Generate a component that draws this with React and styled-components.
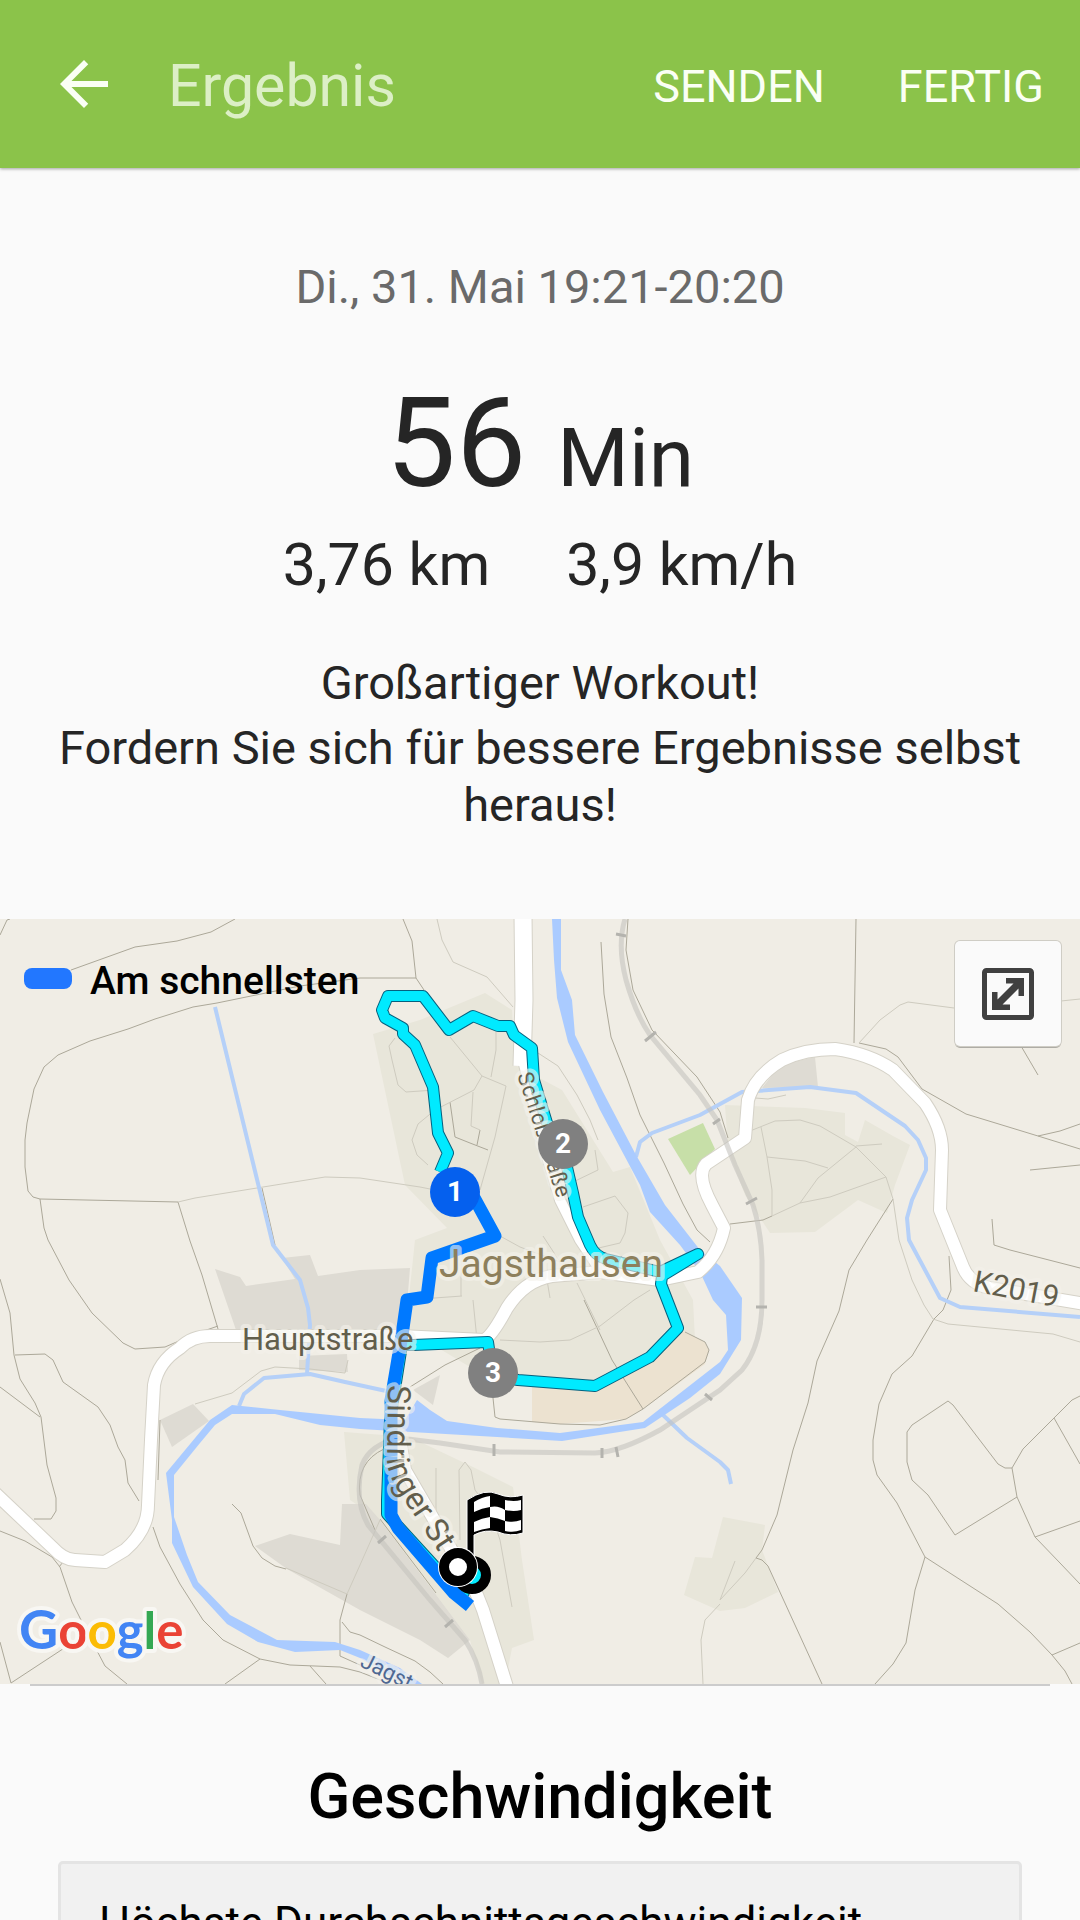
/**
 * App.jsx : Workout result screen
 */

import React from "react";
import styled, { createGlobalStyle, css } from "styled-components";

const App = () => {
  return (
    <Screen>
      <GlobalStyle />
      <Header>
        <BackButton aria-label="Zurück">
          <svg viewBox="0 0 24 24" width="72" height="72" fill="currentColor">
            <path d="M20 11H7.83l5.59-5.59L12 4l-8 8 8 8 1.41-1.41L7.83 13H20v-2z" />
          </svg>
        </BackButton>
        <HeaderTitle>Ergebnis</HeaderTitle>
        <HeaderActions>
          <TextButton>SENDEN</TextButton>
          <TextButton>FERTIG</TextButton>
        </HeaderActions>
      </Header>
      <Content>
        <Summary>
          <DateText>Di., 31. Mai 19:21-20:20</DateText>
          <Duration>
            56 <Unit>Min</Unit>
          </Duration>
          <Stats>
            <span>3,76 km</span>
            <span>3,9 km/h</span>
          </Stats>
          <Praise>Großartiger Workout!</Praise>
          <Message>Fordern Sie sich für bessere Ergebnisse selbst heraus!</Message>
        </Summary>
        <MapBox>
          <RouteMap />
          <Legend>
            <LegendColor />
            Am schnellsten
          </Legend>
          <ExpandButton aria-label="Karte vergrößern">
            <svg viewBox="0 0 52 52" width="52" height="52">
              <rect x="2.5" y="2.5" width="47" height="47" rx="2" fill="none" stroke="#404040" strokeWidth="5" />
              <path
                d="M24 10H42V28H36.500V20.500L20.500 36.500H28V42H10V24H15.500V31.500L31.500 15.500H24Z"
                fill="#404040"
              />
            </svg>
          </ExpandButton>
        </MapBox>
        <Divider />
        <SectionTitle>Geschwindigkeit</SectionTitle>
        <SpeedCard>Höchste Durchschnittsgeschwindigkeit</SpeedCard>
      </Content>
    </Screen>
  );
};

// field paths and parcel borders
const paths = [
  "M0 935L7 920L10 919",
  "M71 970L135 947L177 941L211 932L235 919",
  "M416 978H360L300 986L217 1003L193 1007L155 1019L128 1029L90 1041L58 1055L44 1067L34 1089L27 1123L25 1140V1167L28 1191L33 1197L40 1199L178 1202",
  "M403 919L412 941L416 978L424 990",
  "M178 1202L190 1241L202 1275L218 1329",
  "M40 1199L44 1228L48 1240L69 1280L92 1313L123 1343L135 1349L165 1347L195 1334L218 1326",
  "M262 1188L275 1245",
  "M0 1279L10 1313L14 1355L20 1379L35 1403L41 1417L47 1465L56 1498V1511L51 1519H34",
  "M0 1387L40 1417",
  "M15 1355L45 1354L53 1360L63 1382L98 1407L110 1425L118 1447L125 1460L128 1483L139 1501",
  "M0 1531L25 1541L52 1557L60 1567L72 1602L85 1628L105 1666L127 1684M59 1567L63 1562",
  "M153 1527L160 1547L180 1584L203 1620L223 1640L260 1659L290 1665L340 1667L360 1672L383 1681",
  "M225 1684L260 1659M310 1666L326 1684",
  "M0 1642L11 1683L75 1641",
  "M160 1420L158 1480",
  "M232 1504L241 1513L253 1546L262 1558L275 1566L286 1569",
  "M347 1594L340 1620V1656L360 1665M342 1622L350 1632L360 1635L385 1647L415 1661L430 1672L443 1684",
  "M601 942L604 994L611 1037L627 1078L640 1115L664 1163L683 1204L697 1230L710 1242",
  "M628 919L626 950L633 990L652 1030L697 1077L720 1112L728 1138",
  "M450 1102L455 1137L470 1143L488 1150M477 1145L480 1130",
  "M856 919L854 1043",
  "M859 1043L886 1049L898 1057L922 1089L966 1114L1038 1136L1080 1149M1038 1136L1060 1131L1080 1124",
  "M1021 1046L1038 1075",
  "M1030 1170L1060 1167L1080 1165",
  "M992 1219L994 1245L1010 1250L1080 1268",
  "M893 1199L867 1240L849 1270L839 1311L817 1361L808 1403L793 1450L777 1515L762 1550L756 1558",
  "M730 1224L763 1220L772 1216",
  "M949 1256L951 1290L943 1310L934 1319L912 1356L892 1374L879 1404L873 1440V1460L877 1475L897 1503L925 1557L915 1590L906 1643L893 1664L875 1684",
  "M925 1557L998 1604L1030 1632L1052 1655L1065 1671L1072 1684M1052 1655L1080 1643",
  "M756 1558L762 1560L768 1566L822 1684",
  "M948 1401L912 1425L907 1432V1462L912 1480L928 1495L955 1535L1017 1497L1012 1468H1005L998 1464L953 1405Z",
  "M1012 1468L1023 1449L1054 1418L1072 1400L1080 1396M1054 1418L1080 1464",
  "M1017 1497L1035 1537L1060 1563L1080 1584M1035 1537L1080 1521",
  "M380 1519L436 1593",
  "M584 1300L612 1360L643 1409",
  "M410 1387L445 1365L480 1348",
  "M493 1398L495 1417L500 1419L560 1424L600 1425L626 1419L643 1409L705 1362L709 1350L705 1342L685 1332",
  "M384 1449Q356 1462 360 1495L375 1530",
];

const faintPaths = [
  "M178 1202L195 1198L325 1177L360 1178L420 1187L435 1190",
  "M195 1404L232 1393L261 1371L275 1367L310 1369L345 1373L348 1360",
  "M286 1568L347 1594L360 1565L380 1520",
  "M437 919L442 940L453 962L487 977L513 1007",
  "M395 1038L389 1046L392 1060L398 1085L406 1092L435 1090",
  "M450 1037L482 1076L474 1090L435 1110L418 1124L412 1140L417 1155L428 1165",
  "M482 1076L506 1086L495 1137L480 1190M496 1032V1050L491 1077",
  "M473 1092L471 1126L480 1130",
  "M538 1053L558 1066L577 1095L590 1120L598 1140M595 1150L598 1170L573 1182",
  "M583 1207L615 1196L628 1213L625 1233L620 1243L590 1250",
  "M500 1236L520 1247L560 1262M543 1236L560 1262",
  "M473 1300L477 1340M500 1340L540 1342L570 1340L600 1326L634 1300L650 1290",
  "M407 1300L462 1296M461 1296V1260M577 1283L600 1330M547 1280L550 1298",
  "M436 1468V1525M460 1540L459 1470L465 1462L471 1470L475 1490L490 1510L500 1540L512 1607",
  "M703 1684L701 1640L705 1620L720 1604",
  "M859 1043L880 1020L900 1005L908 1002L954 1008M1061 1001L1080 999",
  "M750 1131L775 1121L800 1120L820 1126L856 1147L886 1177L893 1199L899 1240L912 1280L924 1305L933 1319L948 1324L1053 1334L1080 1342",
  "M761 1127L767 1157L772 1190V1216L800 1203L830 1197L886 1177",
  "M767 1157L805 1161L828 1168M856 1147L818 1178L800 1203M856 1146L882 1144",
  "M720 1600L745 1573L756 1558M720 1600L735 1561",
  "M755 1098L768 1099L786 1095",
];

const settlements = [
  "M373 1034L420 1020L485 993L512 1010L515 1065L562 1090L613 1172L630 1167L660 1240L693 1300L695 1340L590 1385H500L425 1340L405 1335L415 1240L447 1228L405 1185Z",
  "M344 1432L410 1437L475 1468L513 1487L522 1560L534 1640L512 1648L505 1684H482L470 1640L380 1520L350 1500Z",
  "M725 1105L805 1108L845 1113V1135L858 1142L865 1120L893 1136L910 1145L895 1185L887 1213L858 1200L815 1232L770 1233L745 1195L728 1150Z",
  "M723 1517L765 1525L762 1550L778 1592L745 1608L720 1611L684 1595L695 1557L712 1558Z",
];

const industry = [
  "M215 1269L240 1277L246 1286L295 1279L282 1258L310 1255L318 1276L360 1270L410 1268L405 1330H236Z",
  "M299 1356L347 1354L348 1372L299 1370Z",
  "M160 1420L193 1404L209 1421L172 1447Z",
  "M255 1546L290 1534L340 1545L342 1504H366L380 1520L470 1640L448 1658L420 1640L360 1610L287 1569Z",
  "M413 1390L440 1375L433 1405Z",
  "M762 1088L780 1065L815 1057L818 1087Z",
];

const river =
  "M552 919L554 960L557 998L568 1042L600 1110L640 1185L650 1212L680 1245L700 1272L713 1300L726 1315L728 1350L720 1362L643 1422L560 1433L497 1428L447 1421L430 1410L417 1400L405 1420L360 1418L280 1410L232 1405L210 1420L166 1473L172 1520V1543L193 1587L227 1624L258 1642L295 1652L340 1650L360 1658L404 1684H422L400 1668L360 1650L335 1642L277 1640L230 1615L198 1582L187 1555L174 1517V1475L200 1443L215 1425L232 1414H275L320 1425L360 1429L497 1437L562 1441L645 1428L690 1398L720 1374L741 1340L742 1298L720 1266L700 1250L665 1205L636 1155L603 1092L575 1035L572 1000L561 970V919Z";

const streams = [
  "M215 1007L273 1245L300 1280L308 1308L310 1325L307 1374",
  "M239 1406L244 1394L264 1378L310 1374L345 1382L400 1394",
  "M636 1157L640 1142L652 1133L700 1115L742 1092L810 1087L856 1093L905 1126L918 1140L926 1158V1170L912 1200L907 1218L909 1240L940 1298L960 1307L1080 1317",
  "M663 1415L687 1438L720 1462L728 1470L731 1484",
];

const roads = [
  { d: "M523 1060L545 1150L560 1200L580 1240L600 1270", width: 10 },
  { d: "M523 915L524 1000L522 1066", width: 17 },
  { d: "M400 1440L405 1470L440 1530L475 1590L483 1610L508 1690", width: 12 },
  {
    d: "M-5 1493L52 1547Q64 1560 75 1560L105 1562L125 1550Q148 1530 148 1505L151 1440L154 1385Q158 1362 180 1348Q192 1336 210 1336H400L484 1340Q492 1336 507 1308Q525 1280 552 1276L600 1272L660 1280L698 1272Q718 1256 724 1228L712 1205Q696 1175 706 1164L745 1138L748 1100Q755 1076 782 1060Q805 1049 835 1049Q870 1054 893 1070L925 1103Q942 1128 942 1150L940 1210L963 1267Q970 1284 990 1288L1085 1304",
    width: 12,
  },
];

const railway =
  "M625 919Q617 945 626 980Q636 1015 650 1035L700 1095L717 1120L735 1165L753 1205Q761 1230 762 1260V1300Q762 1345 742 1370L720 1390L660 1430Q620 1452 595 1453L500 1452L440 1443L400 1438Q370 1444 362 1465Q354 1500 368 1525L430 1600L465 1640Q478 1660 482 1684";

const railTicks =
  "M616 934L626 936M645 1041L656 1032M713 1124L720 1119M746 1204L757 1198M756 1307H767M705 1394L712 1400M602 1448V1458M616 1447L618 1457M494 1444V1456M378 1543L386 1536M445 1627L453 1620";

const slowRoute =
  "M440 1172L448 1153L438 1133L433 1087L415 1045L403 1034V1028L385 1018L382 1010L388 996H423L449 1030L473 1016L498 1026H510L514 1035L532 1048L534 1080L547 1123L563 1150L573 1193L578 1217L590 1245Q595 1256 606 1259L660 1272L698 1254L662 1276L661 1284L678 1328L650 1357L595 1386L518 1380L493 1376L488 1342L413 1345L402 1345L390 1420L387 1500L387 1514L462 1596L472 1575";

const fastRoute =
  "M471 1192L495 1236L432 1258L427 1297L407 1300L402 1335L391 1400L391 1515L398 1528L454 1593L470 1606";

const markers = [
  { label: "1", x: 455, y: 1192, color: "#0560ee" },
  { label: "2", x: 563, y: 1144, color: "#808080" },
  { label: "3", x: 493, y: 1373, color: "#808080" },
];

const RouteMap = () => (
  <MapSvg viewBox="0 919 1080 765" role="img" aria-label="Karte von Jagsthausen">
    <rect y="919" width="1080" height="765" fill="#f0ede5" />
    <g fill="#e8e6da">
      {settlements.map((d) => (
        <path key={d} d={d} />
      ))}
    </g>
    <g fill="#dedbd3">
      {industry.map((d) => (
        <path key={d} d={d} />
      ))}
    </g>
    <path d="M532 1383V1422L560 1424L626 1419L643 1409L705 1364L709 1350L705 1342L683 1331L652 1360L595 1388Z" fill="#ece2d0" />
    <path d="M668 1139L703 1123L715 1149L690 1175Z" fill="#c7dfa8" />
    <g fill="none" stroke="#aca899">
      {paths.map((d) => (
        <path key={d} d={d} />
      ))}
    </g>
    <g fill="none" stroke="#cecbbf">
      {faintPaths.map((d) => (
        <path key={d} d={d} />
      ))}
    </g>
    <g fill="none" stroke="#b5d0f8" strokeWidth="4" strokeLinejoin="round">
      {streams.map((d) => (
        <path key={d} d={d} />
      ))}
    </g>
    <path d={river} fill="#aacbff" />
    <g fill="none" strokeLinejoin="round">
      {roads.map(({ d, width }) => (
        <path key={d} d={d} stroke="#d5d2c8" strokeWidth={width + 2} />
      ))}
      {roads.map(({ d, width }) => (
        <path key={d} d={d} stroke="#ffffff" strokeWidth={width} />
      ))}
    </g>
    <path d={railway} fill="none" stroke="#c4c3be" strokeOpacity="0.6" strokeWidth="5" />
    <path d={railTicks} fill="none" stroke="#b4b3ae" strokeWidth="3" />

    <g fill="none" strokeLinejoin="round">
      <path d={slowRoute} stroke="#04617f" strokeWidth="12" />
      <path d={slowRoute} stroke="#00eaff" strokeWidth="10" />
    </g>
    <path d={fastRoute} fill="none" stroke="#0079ff" strokeWidth="13" strokeLinejoin="round" />

    <defs>
      <path id="schloss" d="M517 1075L529 1111L557 1198" />
      <path id="sindringer" d="M388 1385L387 1458Q387 1474 400 1494L452 1572" />
    </defs>
    <MapLabel x="439" y="1277" size={39} color="#8d7f5c">
      Jagsthausen
    </MapLabel>
    <MapLabel x="242" y="1350" size={31}>
      Hauptstraße
    </MapLabel>
    <MapLabel size={30} transform="translate(972 1291) rotate(11)">
      K2019
    </MapLabel>
    <MapLabel size={22}>
      <textPath href="#schloss">Schloßstraße</textPath>
    </MapLabel>
    <MapLabel size={32}>
      <textPath href="#sindringer">Sindringer St</textPath>
    </MapLabel>
    <MapLabel size={22} color="#4f6892" transform="translate(359 1666) rotate(26)">
      Jagst
    </MapLabel>

    {markers.map(({ label, x, y, color }) => (
      <g key={label}>
        <circle cx={x} cy={y} r="25" fill={color} />
        <MarkerText x={x} y={y + 9}>
          {label}
        </MarkerText>
      </g>
    ))}

    {/* finish and start points */}
    <circle cx="472" cy="1575" r="14" fill="#00eaff" stroke="#000" strokeWidth="10" />
    <g stroke="#fff" strokeWidth="1">
      <path d="M467 1500Q485 1488 498 1494Q510 1499 523 1495V1533Q510 1537 498 1532Q485 1529 474 1535V1556H467Z" fill="#000" />
    </g>
    <g fill="#fff">
      <path d="M474 1502Q482 1497 490 1496V1507Q482 1508 474 1512Z" />
      <path d="M505 1500Q514 1502 521 1500V1510Q514 1512 505 1510Z" />
      <path d="M490 1507Q498 1505 505 1510V1521Q498 1518 490 1517Z" />
      <path d="M474 1522Q482 1518 490 1517V1528Q482 1529 474 1532Z" />
      <path d="M505 1521Q514 1523 521 1520V1530Q514 1533 505 1531Z" />
    </g>
    <circle cx="458" cy="1567" r="20" fill="#fff" />
    <circle cx="458" cy="1567" r="14" fill="#fff" stroke="#000" strokeWidth="10" />

    <Logo x="19" y="1649">
      <tspan fill="#4285f4" fontSize="54">G</tspan>
      <tspan fill="#ea4335">o</tspan>
      <tspan fill="#fbbc05">o</tspan>
      <tspan fill="#4285f4">g</tspan>
      <tspan fill="#34a853">l</tspan>
      <tspan fill="#ea4335">e</tspan>
    </Logo>
  </MapSvg>
);

const GlobalStyle = createGlobalStyle`
  * {
    box-sizing: border-box;
  }
  body {
    margin: 0;
    background-color: #fafafa;
    font-family: Roboto, "Noto Sans", sans-serif;
  }
  h1, h2, p {
    margin: 0;
    font-weight: 400;
  }
  button {
    padding: 0;
    border: none;
    background: none;
    color: inherit;
    font: inherit;
    cursor: pointer;
  }
`;

const Screen = styled.div`
  display: flex;
  flex-direction: column;
  height: 100vh;
  color: #252525;
`;

const Header = styled.header`
  z-index: 1;
  display: flex;
  flex-shrink: 0;
  align-items: center;
  gap: 48px;
  height: 168px;
  padding: 0 36px 0 48px;
  background-color: #8bc34a;
  color: #fafff5;
  box-shadow: 0 1px 3px rgba(0, 0, 0, 0.35);
`;

const BackButton = styled.button`
  display: flex;
`;

const HeaderTitle = styled.h1`
  flex: 1;
  padding-top: 4px;
  color: #dcefc6;
  font-size: 59px;
  line-height: 70px;
`;

const HeaderActions = styled.div`
  display: flex;
  gap: 73px;
  padding-top: 4px;
`;

const TextButton = styled.button`
  font-size: 45px;
  line-height: 57px;
`;

const Content = styled.main`
  flex: 1;
  min-height: 0;
  overflow-y: auto;
  scrollbar-width: none;
`;

const Summary = styled.section`
  display: flex;
  flex-direction: column;
  align-items: center;
  padding: 90px 48px 86px;
  text-align: center;
`;

const bodyText = css`
  font-size: 47px;
  line-height: 57px;
`;

const DateText = styled.p`
  ${bodyText}
  color: #6a6a6a;
`;

const Duration = styled.p`
  margin-top: 54px;
  font-size: 125px;
  line-height: 150px;
`;

const Unit = styled.span`
  font-size: 82px;
  line-height: 84px;
`;

const Stats = styled.div`
  display: flex;
  gap: 76px;
  margin-top: 11px;
  font-size: 59px;
  line-height: 70px;
`;

const Praise = styled.p`
  ${bodyText}
  margin-top: 54px;
`;

const Message = styled.p`
  ${bodyText}
  margin-top: 8px;
`;

const MapBox = styled.section`
  position: relative;
`;

const MapSvg = styled.svg`
  display: block;
  width: 100%;
  height: auto;
`;

const MapLabel = styled.text`
  fill: ${({ color }) => color || "#625e4c"};
  font-size: ${({ size }) => size}px;
  paint-order: stroke;
  stroke: rgba(244, 242, 235, 0.6);
  stroke-width: 8px;
  stroke-linejoin: round;
`;

const MarkerText = styled.text`
  fill: #ffffff;
  font-size: 28px;
  font-weight: 700;
  text-anchor: middle;
`;

const Logo = styled.text`
  font-family: Lato, sans-serif;
  font-size: 51px;
  font-weight: 700;
  paint-order: stroke;
  stroke: #f8f7f3;
  stroke-width: 8px;
  stroke-linejoin: round;
`;

const Legend = styled.div`
  position: absolute;
  top: 38px;
  left: 24px;
  display: flex;
  align-items: center;
  gap: 18px;
  color: #000000;
  font-size: 39px;
  font-weight: 500;
  line-height: 48px;
`;

const LegendColor = styled.span`
  width: 48px;
  height: 21px;
  margin-bottom: 6px;
  border-radius: 8px;
  background-color: #2277ff;
`;

const ExpandButton = styled.button`
  position: absolute;
  top: 22px;
  right: 19px;
  display: flex;
  align-items: center;
  justify-content: center;
  width: 106px;
  height: 105px;
  border-radius: 5px;
  background-color: #fafafa;
  box-shadow: 0 0 0 1px #cfcdc5, 0 2px 0 #aeaca5;
`;

const Divider = styled.hr`
  height: 2px;
  margin: 0 30px;
  border: none;
  background-color: #cccccc;
`;

const SectionTitle = styled.h2`
  margin: 75px 0 28px;
  color: #000000;
  font-size: 63px;
  font-weight: 500;
  line-height: 72px;
  text-align: center;
`;

const SpeedCard = styled.div`
  margin: 0 58px;
  padding: 31px 38px;
  border: 3px solid #e4e4e4;
  border-radius: 5px;
  background-color: #f1f1f1;
  color: #000000;
  font-size: 44px;
  line-height: 57px;
`;

export default App;
